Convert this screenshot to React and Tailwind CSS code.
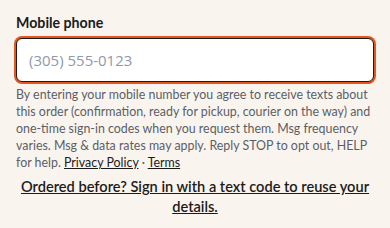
export default function App() {
  return (
    <div className="min-h-screen bg-[#faf4ee] px-4 pt-[13px] text-[#1f1f1f] font-['Segoe_UI','Lato',sans-serif]">
      <label className="block text-[14.2px] font-bold leading-[20px] text-[#1b1b1b]">Mobile phone</label>
      <div className="mt-[5px]">
        <input
          type="tel"
          placeholder="(305) 555-0123"
          className="block h-[44px] w-full rounded-[6px] border border-[#1a1a1a] bg-white px-3 font-['Open_Sans',sans-serif] text-[15px] text-[#1a1a1a] outline-none ring-2 ring-[#e5581d] placeholder:text-[#8e9aa8]"
        />
      </div>
      <p className="mt-[4px] text-[12.4px] leading-[17px] text-[#5a5f66]">
        By entering your mobile number you agree to receive texts about this order (confirmation, ready for pickup, courier on the way) and one-time sign-in codes when you request them. Msg frequency varies. Msg &amp; data rates may apply. Reply STOP to opt out, HELP for help.{' '}
        <a href="#" className="text-[#1b1b1b] underline">Privacy Policy</a>
        {' · '}
        <a href="#" className="text-[#1b1b1b] underline">Terms</a>
      </p>
      <div className="mt-[5px] px-1 text-center leading-[19px]">
        <a href="#" className="text-[14.6px] font-semibold text-[#1b1b1b] underline">
          Ordered before? Sign in with a text code to reuse your details.
        </a>
      </div>
    </div>
  )
}
